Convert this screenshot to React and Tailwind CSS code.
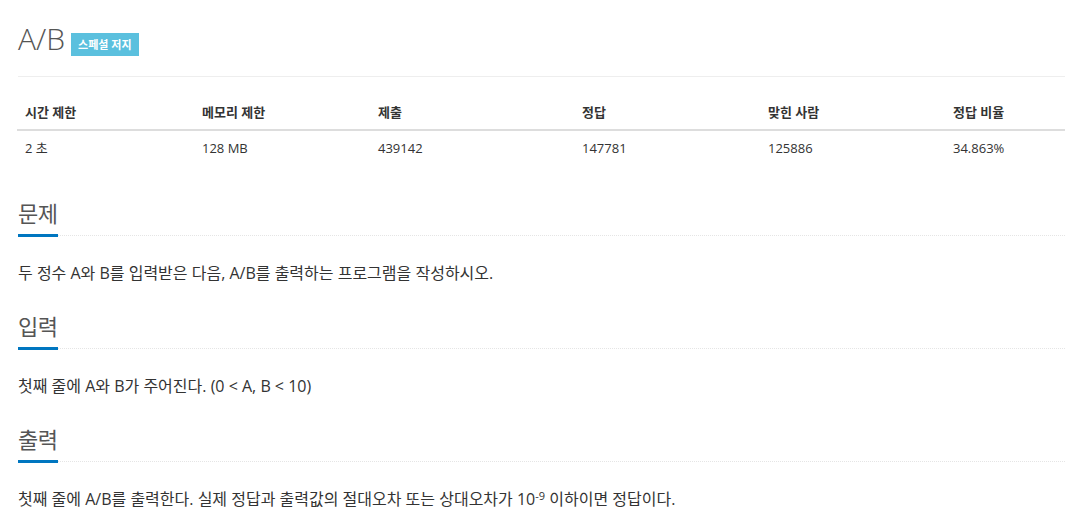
const font = { fontFamily: '"Open Sans", "Noto Sans CJK KR", sans-serif' };

const stats = [
  ['시간 제한', '2 초'],
  ['메모리 제한', '128 MB'],
  ['제출', '439142'],
  ['정답', '147781'],
  ['맞힌 사람', '125886'],
  ['정답 비율', '34.863%'],
];

function Section({ title, children, first }) {
  return (
    <section className={first ? 'mt-[36px]' : 'mt-[30px]'}>
      <div className="border-b border-dotted border-[#e5e5e5]">
        <h2 className="-mb-[2px] inline-block border-b-[3px] border-[#0076c0] pb-[9px] pr-[1px] text-[22px] leading-[24px] font-normal tracking-[-0.5px] text-[#555]">
          {title}
        </h2>
      </div>
      <p className="mt-[26px] text-[16px] leading-[22px] text-[#333]">{children}</p>
    </section>
  );
}

export default function App() {
  return (
    <div className="min-h-[530px] bg-white pl-[18px]" style={font}>
      <div className="flex items-start border-b border-[#eee] pt-[22px] pb-[20px]">
        <h1 className="text-[30px] leading-[33px] font-light text-[#555]">A/B</h1>
        <span className="ml-[6px] mt-[11px] bg-[#5bc0de] px-[7px] text-[11px] leading-[23px] font-bold text-white">
          스페셜 저지
        </span>
      </div>

      <div className="-ml-[1px] mt-[18px] grid grid-cols-[177px_176px_204px_186px_185px_1fr] text-[13px] text-[#333]">
        {stats.map(([h]) => (
          <div key={h} className="border-b-2 border-[#ddd] px-[8px] py-[8px] leading-[18px] font-bold">
            {h}
          </div>
        ))}
        {stats.map(([h, v]) => (
          <div key={h + v} className="px-[8px] py-[8px] leading-[18px]">
            {v}
          </div>
        ))}
      </div>

      <Section title="문제" first>
        두 정수 A와 B를 입력받은 다음, A/B를 출력하는 프로그램을 작성하시오.
      </Section>
      <Section title="입력">첫째 줄에 A와 B가 주어진다. (0 &lt; A, B &lt; 10)</Section>
      <Section title="출력">
        첫째 줄에 A/B를 출력한다. 실제 정답과 출력값의 절대오차 또는 상대오차가 10
        <sup className="text-[11px]">-9</sup> 이하이면 정답이다.
      </Section>
    </div>
  );
}
